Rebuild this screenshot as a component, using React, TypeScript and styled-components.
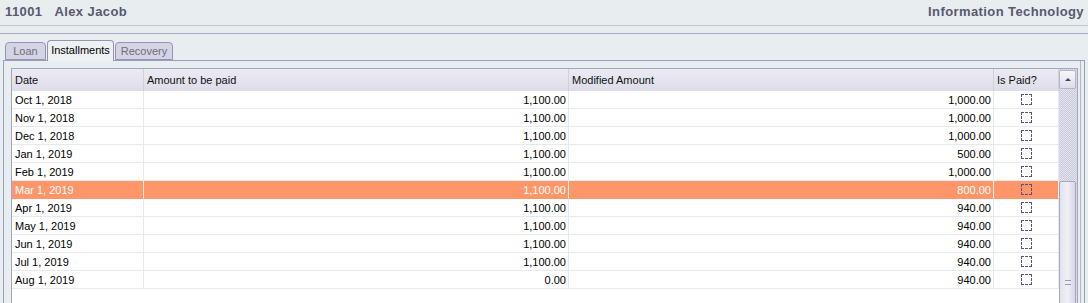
import React from "react";
import styled, { createGlobalStyle } from "styled-components";

const GlobalStyle = createGlobalStyle`
    html, body {
        margin: 0;
        padding: 0;
        height: 303px;
        overflow: hidden;
        background: #e8edf0;
        font-family: "Liberation Sans", Arial, sans-serif;
    }
`;

const Header = styled.div`
    box-sizing: border-box;
    height: 26px;
    display: flex;
    justify-content: space-between;
    align-items: center;
    padding: 0 4px 2px 5px;
    border-bottom: 1px solid #c4c4d6;
    font-size: 13px;
    font-weight: bold;
    letter-spacing: 0.4px;
    color: #58586f;
`;

const Title = styled.div`
    display: flex;
    gap: 12px;
`;

const Rule = styled.div`
    height: 7px;
    border-bottom: 1px solid #a9a9c6;
`;

const TabStrip = styled.div`
    display: flex;
    align-items: flex-end;
    gap: 1px;
    height: 26px;
    padding-left: 5px;
    position: relative;
    z-index: 1;
`;

const Tab = styled.div<{ $active?: boolean; $w: number }>`
    box-sizing: border-box;
    width: ${(p) => p.$w}px;
    height: ${(p) => (p.$active ? 21 : 18)}px;
    margin-bottom: ${(p) => (p.$active ? -1 : 0)}px;
    border: 1px solid #9494b4;
    border-bottom: ${(p) => (p.$active ? "none" : "1px solid #9494b4")};
    border-radius: 4px 4px 0 0;
    background: ${(p) => (p.$active ? "#eef1f3" : "#d4d4e4")};
    color: ${(p) => (p.$active ? "#000" : "#6e6e80")};
    font-size: 11px;
    display: flex;
    justify-content: center;
    align-items: center;
    padding-bottom: ${(p) => (p.$active ? 2 : 0)}px;
`;

const Panel = styled.div`
    margin: 0 3px;
    border: 1px solid #9c9cbc;
    border-bottom: none;
    padding: 7px 6px 0 7px;
    box-shadow: inset -3px 0 0 #e8edf0, inset -4px 0 0 #b4b4cc;
`;

const Grid = styled.div`
    display: flex;
    border: 1px solid #a4a4c4;
    background: #fff;
    height: 260px;
`;

const Table = styled.div`
    display: grid;
    grid-template-columns: 132px 425px 425px 65px;
    grid-template-rows: 22px;
    grid-auto-rows: 18px;
    align-content: start;
    width: 1047px;
`;

const HeadCell = styled.div`
    box-sizing: border-box;
    display: flex;
    align-items: center;
    padding: 0 3px 1px;
    font-size: 11px;
    color: #111;
    background: linear-gradient(#ebecf2, #dcdde8);
    border-right: 1px solid #cfd0de;
`;

const Cell = styled.div<{ $right?: boolean; $center?: boolean; $hot?: boolean }>`
    box-sizing: border-box;
    display: flex;
    align-items: center;
    justify-content: ${(p) => (p.$center ? "center" : p.$right ? "flex-end" : "flex-start")};
    padding: 0 2px 0 3px;
    font-size: 11px;
    color: ${(p) => (p.$hot ? "#fff" : "#000")};
    background: ${(p) => (p.$hot ? "#fe9669" : "#fff")};
    border-right: 1px solid ${(p) => (p.$hot ? "#fff3ec" : "#e4eaee")};
    border-bottom: 1px solid ${(p) => (p.$hot ? "#fe9669" : "#e4eaee")};
`;

const Check = styled.span`
    box-sizing: border-box;
    width: 11px;
    height: 11px;
    border: 1px dashed #55557c;
`;

const ScrollBar = styled.div`
    width: 18px;
    display: flex;
    flex-direction: column;
    background: repeating-conic-gradient(#c9c9dc 0% 25%, #e4e4ee 0% 50%) 0 0 / 2px 2px;
`;

const UpButton = styled.div`
    box-sizing: border-box;
    height: 19px;
    margin: 1px 1px 0 0;
    border: 1px solid #b4b4cc;
    border-radius: 2px;
    background: linear-gradient(#f6f6fa, #dedee9);
    display: flex;
    justify-content: center;
    align-items: center;
`;

const Arrow = styled.span`
    width: 0;
    height: 0;
    border-left: 3px solid transparent;
    border-right: 3px solid transparent;
    border-bottom: 3px solid #44445a;
`;

const Track = styled.div`
    height: 92px;
`;

const Thumb = styled.div`
    box-sizing: border-box;
    flex: 1;
    margin-right: 1px;
    border: 1px solid #a8a8c6;
    border-radius: 2px;
    background: linear-gradient(90deg, #e2e2ee, #f0f0f6 50%, #d6d6e6);
    display: flex;
    justify-content: center;
    padding-top: 98px;
`;

const Grip = styled.span`
    width: 6px;
    height: 3px;
    border-top: 1px solid #9a9ab8;
    border-bottom: 1px solid #9a9ab8;
`;

const rows: [string, string, string][] = [
    ["Oct 1, 2018", "1,100.00", "1,000.00"],
    ["Nov 1, 2018", "1,100.00", "1,000.00"],
    ["Dec 1, 2018", "1,100.00", "1,000.00"],
    ["Jan 1, 2019", "1,100.00", "500.00"],
    ["Feb 1, 2019", "1,100.00", "1,000.00"],
    ["Mar 1, 2019", "1,100.00", "800.00"],
    ["Apr 1, 2019", "1,100.00", "940.00"],
    ["May 1, 2019", "1,100.00", "940.00"],
    ["Jun 1, 2019", "1,100.00", "940.00"],
    ["Jul 1, 2019", "1,100.00", "940.00"],
    ["Aug 1, 2019", "0.00", "940.00"],
];

const App: React.FC = () => {
    return (
        <>
            <GlobalStyle />
            <Header>
                <Title>
                    <span>11001</span>
                    <span>Alex Jacob</span>
                </Title>
                <span>Information Technology</span>
            </Header>
            <Rule />
            <TabStrip>
                <Tab $w={41}>Loan</Tab>
                <Tab $w={67} $active>
                    Installments
                </Tab>
                <Tab $w={58}>Recovery</Tab>
            </TabStrip>
            <Panel>
                <Grid>
                    <Table>
                        <HeadCell>Date</HeadCell>
                        <HeadCell>Amount to be paid</HeadCell>
                        <HeadCell>Modified Amount</HeadCell>
                        <HeadCell>Is Paid?</HeadCell>
                        {rows.map(([date, amount, modified], i) => {
                            const hot = i === 5;
                            return (
                                <React.Fragment key={date}>
                                    <Cell $hot={hot}>{date}</Cell>
                                    <Cell $hot={hot} $right>
                                        {amount}
                                    </Cell>
                                    <Cell $hot={hot} $right>
                                        {modified}
                                    </Cell>
                                    <Cell $hot={hot} $center>
                                        <Check />
                                    </Cell>
                                </React.Fragment>
                            );
                        })}
                    </Table>
                    <ScrollBar>
                        <UpButton>
                            <Arrow />
                        </UpButton>
                        <Track />
                        <Thumb>
                            <Grip />
                        </Thumb>
                    </ScrollBar>
                </Grid>
            </Panel>
        </>
    );
};

export default App;
